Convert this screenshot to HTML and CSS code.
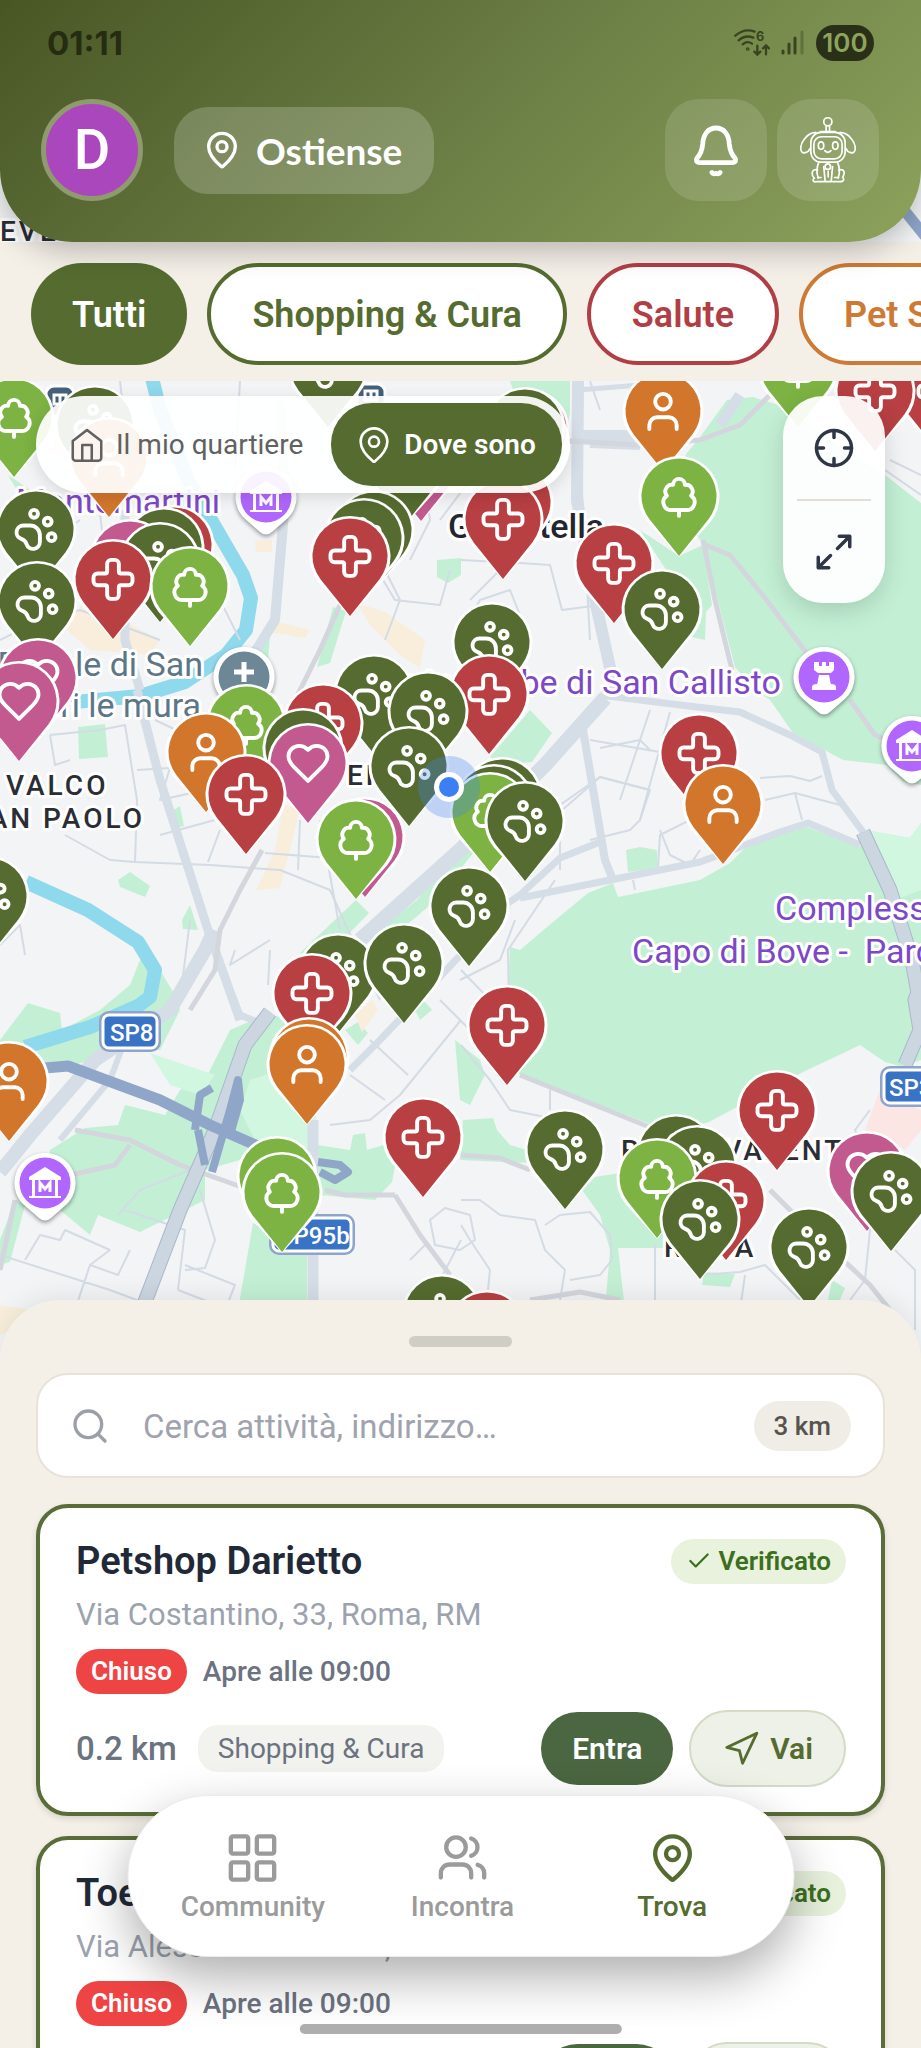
FILE: index.html
```html
<!DOCTYPE html>
<html lang="it">

<head>
    <meta charset="UTF-8">
    <meta name="viewport" content="width=device-width, initial-scale=1.0">
    <title>Trova</title>
    <link rel="stylesheet" href="styles.css">
</head>

<body>
    <!-- Shared icons -->
    <svg class="sprite" aria-hidden="true">
        <defs>
            <g id="i-pin">
                <path d="M20 10c0 4.993-5.539 10.193-7.399 11.799a1 1 0 0 1-1.202 0C9.539 20.193 4 14.993 4 10a8 8 0 0 1 16 0" />
                <circle cx="12" cy="10" r="3" />
            </g>
            <path id="i-cross" d="M4 9a2 2 0 0 0-2 2v2a2 2 0 0 0 2 2h4a1 1 0 0 1 1 1v4a2 2 0 0 0 2 2h2a2 2 0 0 0 2-2v-4a1 1 0 0 1 1-1h4a2 2 0 0 0 2-2v-2a2 2 0 0 0-2-2h-4a1 1 0 0 1-1-1V4a2 2 0 0 0-2-2h-2a2 2 0 0 0-2 2v4a1 1 0 0 1-1 1z" />
            <g id="i-paw">
                <circle cx="11" cy="4" r="2" />
                <circle cx="18" cy="8" r="2" />
                <circle cx="20" cy="16" r="2" />
                <path d="M9 10a5 5 0 0 1 5 5v3.5a3.5 3.5 0 0 1-6.84 1.045Q6.52 17.48 4.46 16.84A3.5 3.5 0 0 1 5.5 10Z" />
            </g>
            <g id="i-user">
                <circle cx="12" cy="7" r="4" />
                <path d="M19 21v-2a4 4 0 0 0-4-4H9a4 4 0 0 0-4 4v2" />
            </g>
            <path id="i-tree" d="M8 19a4 4 0 0 1-2.24-7.32A3.5 3.5 0 0 1 9 6.03V6a3 3 0 1 1 6 0v.04a3.5 3.5 0 0 1 3.24 5.65A4 4 0 0 1 16 19Zm4 0v3" />
            <path id="i-heart" d="M19 14c1.49-1.46 3-3.21 3-5.5A5.5 5.5 0 0 0 16.5 3c-1.76 0-3 .5-4.5 2-1.5-1.5-2.74-2-4.5-2A5.5 5.5 0 0 0 2 8.5c0 2.29 1.51 4.04 3 5.5l7 7Z" />
            <g id="i-send"><path d="M3 11 22 2l-9 19-2-8z" /></g>

            <path id="drop-edge" d="M0 1L-31-33.500A40.500 40.500 0 1 1 31-33.500Z" />
            <path id="drop" d="M0 0L-29.300-36.600A37.500 37.500 0 1 1 29.300-36.600Z" />
            <g id="m-shop">
                <use href="#drop-edge" class="edge" /><use href="#drop" class="shop" />
                <use href="#i-paw" class="glyph" transform="translate(-23.400 -83) scale(1.950)" />
            </g>
            <g id="m-health">
                <use href="#drop-edge" class="edge" /><use href="#drop" class="health" />
                <use href="#i-cross" class="glyph" transform="translate(-23.400 -83) scale(1.950)" />
            </g>
            <g id="m-sitter">
                <use href="#drop-edge" class="edge" /><use href="#drop" class="sitter" />
                <use href="#i-user" class="glyph" transform="translate(-23.400 -83) scale(1.950)" />
            </g>
            <g id="m-park">
                <use href="#drop-edge" class="edge" /><use href="#drop" class="park" />
                <use href="#i-tree" class="glyph" transform="translate(-23.400 -83) scale(1.950)" />
            </g>
            <g id="m-love">
                <use href="#drop-edge" class="edge" /><use href="#drop" class="love" />
                <use href="#i-heart" class="glyph" transform="translate(-23.400 -83) scale(1.950)" />
            </g>
            <path id="poi" d="M0-30A30 30 0 0 1 22 21L6 35Q0 40-6 35L-22 21A30 30 0 0 1 0-30Z" />
            <g id="museum">
                <use href="#poi" class="poi" />
                <circle r="25.500" fill="#b066ff" />
                <path d="M-16-6 0-16 16-6v3h-32zM-13-3h3v16h-3zM10-3h3v16h-3zM-16 13h32v2h-32z" fill="#fff" />
                <path d="M-5 9V0l5 6 5-6v9" fill="none" stroke="#fff" stroke-width="3" />
            </g>
        </defs>
    </svg>

    <div class="app">
        <!-- Map -->
        <svg class="map-canvas" viewBox="0 0 921 1400" preserveAspectRatio="xMidYMin slice" role="img" aria-label="Mappa di Ostiense">
            <rect width="921" height="1400" fill="#f3f4f5" />
            <g class="green">
                <path d="M665 480 700 437 727 400 753 397 785 407 830 440 885 475 921 503V785L903 782 887 765 843 760 793 733 770 700 755 690 735 667 715 590 703 545Z" />
                <path d="M640 530 679 556 703 545 712 605 706 612 705 640 692 637 676 585Z" />
                <path d="M510 947 520 950 547 927 588 893 613 883 618 897 700 880 730 863 743 850 780 833 807 827 860 847 865 830 910 838 921 823V1060L903 1067 885 1062 860 1045 833 1058 807 1070 737 1107 707 1123 653 1125 520 1075 505 1060Z" />
                <path d="M50 1150 85 1128 118 1125 125 1105 165 1115 180 1090 205 1080 230 1030 265 1015 308 1020 318 1150 240 1160 205 1170 205 1200 140 1232 98 1215 90 1235 60 1210 45 1180Z" />
                <path d="M0 1040 28 1003 60 1013 62 1030 100 1010 130 985 140 960 155 962 175 995 180 1010 160 1050 120 1050 60 1070 0 1070Z" />
                <path d="M0 1240 15 1200 25 1205 10 1262 0 1265Z" />
                <path d="M300 953 356 900 369 913 330 953Z" />
                <path d="M367 940 417 900 443 868 470 835 480 845 430 905 395 935Z" />
                <path d="M78 727 105 724 108 757 79 759Z" />
                <path d="M170 812 180 806 184 826 172 829Z" />
                <path d="M118 880 130 872 150 886 145 897 120 887Z" />
                <path d="M182 920 190 905 198 930 183 929Z" />
                <path d="M238 1310 253 1223 307 1250V1310Z" />
                <path d="M317 1145 350 1150 353 1135 365 1133 367 1150 400 1140 392 1182 375 1200 320 1195Z" />
                <path d="M345 1030 358 1022 368 1033 358 1045Z" />
                <path d="M410 1000 425 1002 432 1010 420 1020Z" />
                <path d="M455 1040 480 1060 485 1075 470 1105 460 1100Z" />
                <path d="M463 1120 493 1118 497 1130 510 1145 527 1150 530 1163 460 1160Z" />
                <path d="M575 1180 640 1170 668 1190 665 1248 618 1248 625 1310 605 1310 610 1250 600 1215Z" />
                <path d="M704 1272 735 1274 730 1287 702 1285Z" />
                <path d="M832 1280 845 1288 840 1300 828 1300Z" />
                <path d="M437 560 461 558V575L448 583 437 577Z" />
                <path d="M333 607 346 611 330 663 317 667Z" />
                <path d="M258 655 270 635 268 662Z" />
                <path d="M490 757 530 710 552 733 532 762 500 765Z" />
                <path d="M626 850 640 847 657 850 658 868 628 872Z" />
                <path d="M510 381H570V412L560 470 545 460 520 410Z" />
                <path d="M8 475 30 490 20 495Z" />
            </g>
            <path class="light-green" d="M250 1080 310 1060 318 1150 255 1140 240 1110ZM150 1053 215 1075 200 1095 170 1085ZM865 830 910 838 921 823V890L895 900Z" />
            <g class="sand">
                <path d="M65 628 85 600 160 640 150 655 90 650Z" />
                <path d="M270 620 310 630 305 638 268 632Z" />
                <path d="M357 603 385 612 425 640 420 668 400 655 370 625Z" />
                <path d="M283 804 300 810 280 888 256 890 275 850Z" />
                <path d="M60 430 75 440 70 460 50 450Z" />
                <path d="M255 540H272V552H256Z" />
                <path d="M355 1015 372 1000 378 1010 362 1032Z" />
                <path d="M0 1305 30 1310 10 1330 0 1335Z" />
            </g>
            <path d="M880 1090 921 1110V1130L905 1150 865 1130Z" fill="#fbe6e4" />

            <g class="river">
                <path d="M152 378 160 410 188 480 214 525 243 575 251 598 246 630 226 655 185 682 140 696 75 702" />
                <path d="M26 882 88 910 138 942 155 970 150 997 138 1006 90 1027 25 1047" />
            </g>

            <g class="street">
                <path d="M0 640 40 620 80 610 160 640M95 470 110 600M200 560 240 640M80 520 20 560" />
                <path d="M50 735 100 730 125 725 137 800 135 862 210 865 280 870 330 890 380 1000" />
                <path d="M50 735 55 765 70 760M65 835 110 860 135 862M155 720 240 760M137 770 170 768 160 800 205 790M160 835 215 820M220 830 208 862" />
                <path d="M265 853 330 858M300 820 298 870M320 820 340 930M180 1000 190 920M0 945 20 925 25 955M270 950 268 985M235 950 230 965 270 940" />
                <path d="M380 575 395 600 440 605 450 570M385 640 400 600 385 570 395 540M420 450 430 520 410 560M440 520 470 480" />
                <path d="M461 560 520 563 550 565 562 610 600 605M500 570 470 600M461 635 480 600 510 590 530 640M580 455 590 640" />
                <path d="M560 812 600 777 650 790M600 748 640 740 650 750M650 710 620 800M670 712 640 820M560 870 560 812M590 740 660 752M760 778 790 776 810 781 822 776M765 800 795 793 840 805M795 793 802 820" />
                <path d="M600 777 650 790 640 820 630 830 590 840M660 830 670 855 690 865 700 850M690 820 660 835 658 868M633 880 635 890M560 805 600 777" />
                <path d="M510 1080 508 950 555 880M460 980 500 960 515 920M461 970 490 1000" />
                <path d="M370 1040 408 1075M350 1075 385 1100M330 1125 370 1120 400 1095 461 1020M440 1000 480 1040M461 1045 490 1080 510 1110 550 1118M550 1090V1110" />
                <path d="M0 1255 110 1290 150 1305M25 1260 40 1235 60 1240 65 1230 110 1250M90 1265 75 1310M110 1250 90 1265 118 1275 130 1250M125 1210 185 1230 178 1290M185 1265 235 1285 225 1310M200 1190 215 1240 205 1268 185 1270M178 1290 230 1310M118 1215 140 1190 190 1170" />
                <path d="M430 1220 445 1208 470 1215 475 1240 460 1250 435 1245ZM461 1200 480 1200 500 1215 535 1220 545 1250 565 1270 560 1300M545 1225 560 1215 590 1212 610 1235 612 1260 600 1275 570 1280M461 1225 470 1240 490 1270 488 1290M410 1260 425 1245M461 1240 440 1280" />
                <path d="M655 1245 655 1310M700 1275 740 1272 765 1265 800 1300M745 1275 740 1310M840 1200 870 1230 865 1280 850 1300M895 1250 915 1270 915 1330M870 1110 855 1130 865 1150" />
                <path d="M590 381 600 410M885 470 921 495M890 460 921 475M240 381 235 470M120 381 130 470" />
            </g>

            <g class="road">
                <path d="M137 690 160 780 208 930 240 1020" />
                <path d="M125 510V640L140 690" />
                <path d="M0 1172 30 1135 95 1060 170 1010 205 950 214 930" stroke-width="14" />
                <path d="M60 1140 110 1080 125 1040" stroke-width="6" />
                <path d="M280 400 285 500 275 620 250 660" stroke-width="10" />
                <path d="M360 940 460 850 545 765 605 698" stroke-width="15" />
                <path d="M600 695 680 705 740 712 790 735 822 752 832 790 863 832" stroke-width="7" />
                <path d="M578 381 577 500 595 600 615 690" stroke-width="12" />
                <path d="M578 435H640M590 443 640 445" stroke-width="10" />
                <path d="M578 390 640 385" stroke-width="5" />
                <path d="M583 730 605 860 613 880" stroke-width="8" />
                <path d="M505 905 520 895 560 858 600 842M520 898 610 880 700 862 780 832 808 823 860 845" stroke-width="7" />
                <path d="M508 905 470 945 380 1040 350 1070" stroke-width="7" />
                <path d="M230 990 240 1015 265 1025" stroke-width="7" />
                <path d="M313 1320V1120" stroke-width="11" />
                <path d="M720 425 740 395" stroke-width="11" />
            </g>
            <g class="rail">
                <path d="M262 850 240 890 220 930 215 970 190 1010" />
                <path d="M360 560 320 650 295 700" />
                <path d="M461 435 640 445 700 440 740 425 775 390" />
                <path d="M703 540 715 600 732 670M705 545 730 555 765 598 808 655 825 690M850 700 875 735 900 745" />
                <path d="M75 1130 130 1140 180 1165 250 1190M130 1145 115 1165 70 1175M15 1200 0 1270" />
                <path d="M325 1190 345 1195 395 1195M395 1195 420 1235 450 1275M770 1190 800 1220 870 1285 890 1310" />
                <path d="M530 1300 580 1292 620 1300M461 1155 500 1158 530 1170" />
                <path d="M520 1075 652 1128" />
            </g>
            <path id="motorway" class="motorway-edge" d="M270 1012 245 1045 215 1130 180 1210 140 1315M863 832 890 890 912 960 921 1010M921 985 915 1000 920 1030 905 1065" />
            <path class="motorway" d="M270 1012 245 1045 215 1130 180 1210 140 1315M863 832 890 890 912 960 921 1010M921 985 915 1000 920 1030 905 1065" />
            <g class="highway">
                <path d="M45 1068 68 1066 160 1100 210 1125 260 1147" />
                <path d="M195 1130 200 1095 212 1088M198 1130 205 1165M212 1172 230 1110 238 1080 240 1100 230 1135M318 1162 340 1165 348 1172 335 1180 320 1172" stroke-width="8" />
                <path d="M900 205 925 236" stroke-width="11" />
            </g>

            <g class="label">
                <text x="0" y="241" class="area">EVERE</text>
                <text x="220" y="513" class="place" text-anchor="end">Montemartini</text>
                <text x="448" y="538" class="town">Garbatella</text>
                <text x="203" y="676" class="health-place" text-anchor="end">Papale di San</text>
                <text x="201" y="717" class="health-place" text-anchor="end">fuori le mura</text>
                <text x="6" y="795" class="area">VALCO</text>
                <text x="145" y="828" class="area" text-anchor="end">SAN PAOLO</text>
                <text x="347" y="785" class="area">EN</text>
                <text x="781" y="694" class="place" text-anchor="end">Catacombe di San Callisto</text>
                <text x="775" y="920" class="place">Complesso</text>
                <text x="632" y="963" class="place">Capo di Bove -&#160; Parco</text>
                <text x="621" y="1160" class="area">ROMA VALENT</text>
                <text x="664" y="1257" class="area">ROMA</text>
            </g>

            <g class="shield">
                <rect x="103" y="1015" width="54" height="33" rx="6" class="shield-ring" />
                <rect x="103" y="1015" width="54" height="33" rx="6" />
                <text x="110" y="1041">SP8</text>
                <rect x="273" y="1218" width="78" height="33" rx="6" class="shield-ring" />
                <rect x="273" y="1218" width="78" height="33" rx="6" />
                <text x="279" y="1244">SP95b</text>
                <rect x="884" y="1070" width="60" height="33" rx="6" class="shield-ring" />
                <rect x="884" y="1070" width="60" height="33" rx="6" />
                <text x="889" y="1096">SP3</text>
            </g>

            <!-- Points of interest -->
            <use href="#museum" x="266" y="497" />
            <use href="#museum" x="45" y="1183" />
            <use href="#museum" x="912" y="746" />
            <g transform="translate(824 677)">
                <use href="#poi" class="poi" />
                <circle r="25.500" fill="#b066ff" />
                <path d="M-10-15h5v4h3v-4h4v4h3v-4h5v8l-3 3H-6l-4-3zM-5-2H5l2 10H-7zM-12 10q0-3 5-3H7q5 0 5 3v3h-24z" fill="#fff" />
            </g>
            <g transform="translate(244 677)">
                <use href="#poi" class="poi" />
                <circle r="25.500" fill="#6d8797" />
                <path d="M-10-5H10M0-15V5" stroke="#fff" stroke-width="5" />
            </g>
            <g class="metro">
                <g transform="translate(60 396)"><rect x="-14" y="-10" width="28" height="30" rx="8" /><path d="M-6-1H6V8H-6ZM0-1V8" /></g>
                <g transform="translate(371 396)"><rect x="-14" y="-12" width="28" height="30" rx="8" /><path d="M-6-5H6V4H-6ZM0-5V4" /></g>
            </g>

            <!-- Markers, back to front -->
            <use href="#m-park" x="14" y="477" />
            <use href="#m-shop" x="95" y="485" />
            <use href="#m-sitter" x="109" y="517" />
            <use href="#m-shop" x="328" y="427" />
            <use href="#m-love" x="529" y="489" />
            <use href="#m-shop" x="525" y="487" />
            <use href="#m-sitter" x="663" y="471" />
            <use href="#m-park" x="798" y="427" />
            <use href="#m-health" x="938" y="451" />
            <use href="#m-health" x="875" y="451" />
            <use href="#m-love" x="421" y="521" />
            <use href="#m-shop" x="406" y="523" />
            <use href="#m-health" x="513" y="562" />
            <use href="#m-health" x="503" y="579" />
            <use href="#m-park" x="679" y="556" />
            <use href="#m-shop" x="36" y="589" />
            <use href="#m-shop" x="37" y="661" />
            <use href="#m-health" x="174" y="605" />
            <use href="#m-shop" x="164" y="607" />
            <use href="#m-love" x="130" y="619" />
            <use href="#m-shop" x="160" y="622" />
            <use href="#m-health" x="113" y="639" />
            <use href="#m-park" x="190" y="646" />
            <use href="#m-shop" x="374" y="590" />
            <use href="#m-shop" x="364" y="598" />
            <use href="#m-health" x="350" y="616" />
            <use href="#m-health" x="614" y="623" />
            <use href="#m-shop" x="662" y="669" />
            <use href="#m-love" x="38" y="738" />
            <use href="#m-love" x="19" y="761" />
            <use href="#m-shop" x="492" y="702" />
            <use href="#m-health" x="489" y="754" />
            <use href="#m-shop" x="374" y="754" />
            <use href="#m-shop" x="428" y="771" />
            <use href="#m-park" x="246" y="784" />
            <use href="#m-health" x="323" y="783" />
            <use href="#m-shop" x="303" y="808" />
            <use href="#m-love" x="308" y="823" />
            <use href="#m-sitter" x="206" y="812" />
            <use href="#m-health" x="246" y="854" />
            <use href="#m-health" x="699" y="813" />
            <use href="#m-sitter" x="723" y="864" />
            <use href="#m-shop" x="409" y="826" />
            <use href="#m-shop" x="502" y="857" />
            <use href="#m-shop" x="494" y="864" />
            <use href="#m-park" x="490" y="872" />
            <circle cx="449" cy="787" r="31" fill="#4285f4" opacity=".3" />
            <circle cx="449" cy="787" r="15" fill="#fff" />
            <circle cx="449" cy="787" r="10" fill="#3c7ff5" />
            <use href="#m-shop" x="525" y="881" />
            <use href="#m-love" x="365" y="897" />
            <use href="#m-park" x="356" y="899" />
            <use href="#m-shop" x="-11" y="956" />
            <use href="#m-shop" x="469" y="966" />
            <use href="#m-shop" x="338" y="1033" />
            <use href="#m-shop" x="404" y="1023" />
            <use href="#m-health" x="312" y="1053" />
            <use href="#m-health" x="507" y="1085" />
            <use href="#m-sitter" x="309" y="1117" />
            <use href="#m-sitter" x="307" y="1124" />
            <use href="#m-sitter" x="9" y="1141" />
            <use href="#m-health" x="777" y="1170" />
            <use href="#m-health" x="423" y="1197" />
            <use href="#m-shop" x="565" y="1209" />
            <use href="#m-shop" x="676" y="1214" />
            <use href="#m-shop" x="697" y="1225" />
            <use href="#m-love" x="867" y="1231" />
            <use href="#m-park" x="277" y="1236" />
            <use href="#m-park" x="657" y="1238" />
            <use href="#m-park" x="282" y="1252" />
            <use href="#m-shop" x="891" y="1251" />
            <use href="#m-health" x="726" y="1260" />
            <use href="#m-shop" x="700" y="1279" />
            <use href="#m-shop" x="809" y="1307" />
            <use href="#m-shop" x="442" y="1374" />
            <use href="#m-health" x="487" y="1390" />
        </svg>

        <header class="header">
            <div class="status">
                <span class="clock">01:11</span>
                <div class="status-icons">
                    <svg width="36" height="28" viewBox="0 0 108 84" class="wifi" aria-hidden="true">
                        <path d="M4 20Q32-4 62 8M14 34Q34 16 58 26M26 46Q40 34 54 44" />
                        <circle cx="41" cy="60" r="2" />
                        <path d="M70 50V76M61 68l9 9 9-9M96 76V50M87 58l9-9 9 9" />
                        <text x="66" y="35">6</text>
                    </svg>
                    <svg width="24" height="26" viewBox="0 0 24 26" class="bars" aria-hidden="true">
                        <path d="M3 21v2M9 14v9M15 8v15" />
                        <path d="M22 2v21" opacity=".4" />
                    </svg>
                    <span class="battery">100</span>
                </div>
            </div>
            <div class="header-row">
                <button class="avatar" aria-label="Profilo">D</button>
                <button class="location">
                    <svg class="icon" width="40" height="40" viewBox="0 0 24 24"><use href="#i-pin" /></svg>
                    Ostiense
                </button>
                <div class="header-actions">
                    <button class="square-btn" aria-label="Notifiche">
                        <svg class="icon" width="58" height="58" viewBox="0 0 24 24">
                            <path d="M10.300 21.300q.7.900 1.700.4 1 .5 1.700-.4M5 17.200h14c1 0 1.500-1 .9-1.800C18.500 14 17.800 12.500 17.500 9.500 17.300 5.800 15.400 2.900 12 2.900S6.700 5.800 6.500 9.500C6.200 12.500 5.500 14 4.100 15.400 3.500 16.200 4 17.200 5 17.200Z" />
                        </svg>
                    </button>
                    <button class="square-btn" aria-label="Assistente">
                        <svg class="robot" width="56" height="66" viewBox="0 0 165 194">
                            <circle cx="82" cy="14" r="12" />
                            <path d="M77 27v16M87 27v16M60 43h44" />
                            <rect x="32" y="45" width="101" height="88" rx="30" />
                            <rect x="41" y="58" width="83" height="65" rx="22" />
                            <ellipse cx="62" cy="84" rx="8" ry="11" />
                            <ellipse cx="104" cy="84" rx="8" ry="11" />
                            <path d="M73 99q9 10 18 0" />
                            <path d="M47 46C22 44-2 78 3 98c3 12 22 8 27-6M118 46c25-2 49 32 44 52-3 12-22 8-27-6" />
                            <path d="M56 132c-8 18-8 34-2 48M110 132c8 18 8 34 2 48M70 146l4 42M96 146l-4 42M83 160v16" />
                            <circle cx="82" cy="146" r="8" />
                            <path d="M52 156c-18-6-20 14-10 24-8 8 0 12 6 10h70c8 2 14-6 8-12 8-16 4-26-12-22M62 178h-10M102 178h12" />
                        </svg>
                    </button>
                </div>
            </div>
        </header>

        <nav class="filters" aria-label="Categorie">
            <button class="chip chip-active">Tutti</button>
            <button class="chip chip-shop">Shopping &amp; Cura</button>
            <button class="chip chip-health">Salute</button>
            <button class="chip chip-sitter">Pet Sitter</button>
        </nav>

        <section class="map-area">
            <div class="switch">
                <button class="switch-btn">
                    <svg class="icon thin" width="38" height="38" viewBox="0 0 24 24">
                        <path d="M3 9.500 12 2.500l9 7V20a2 2 0 0 1-2 2H5a2 2 0 0 1-2-2zM9 22V12h6v10" />
                    </svg>
                    Il mio quartiere
                </button>
                <button class="switch-btn switch-on">
                    <svg class="icon thin" width="40" height="40" viewBox="0 0 24 24"><use href="#i-pin" /></svg>
                    Dove sono
                </button>
            </div>
            <div class="map-tools">
                <button aria-label="Centra la mappa">
                    <svg class="icon" width="42" height="42" viewBox="0 0 24 24">
                        <circle cx="12" cy="12" r="10" />
                        <path d="M22 12h-4M6 12H2M12 6V2M12 22v-4" />
                    </svg>
                </button>
                <button aria-label="Schermo intero">
                    <svg class="icon" width="42" height="42" viewBox="0 0 24 24">
                        <path d="M15 3h6v6M21 3l-7 7M9 21H3v-6M3 21l7-7" />
                    </svg>
                </button>
            </div>
        </section>

        <main class="sheet">
            <div class="handle"></div>
            <div class="search">
                <label for="q" aria-label="Cerca">
                    <svg class="icon" width="40" height="40" viewBox="0 0 24 24">
                        <circle cx="11" cy="11" r="8" />
                        <path d="m21 21-4.300-4.300" />
                    </svg>
                </label>
                <input id="q" type="text" placeholder="Cerca attività, indirizzo…">
                <button class="radius">3 km</button>
            </div>

            <article class="card">
                <div class="card-head">
                    <h2>Petshop Darietto</h2>
                    <span class="verified">
                        <svg class="icon" width="26" height="26" viewBox="0 0 24 24"><path d="M20 6 9 17l-5-5" /></svg>
                        Verificato
                    </span>
                </div>
                <p class="address">Via Costantino, 33, Roma, RM</p>
                <p class="hours"><span class="closed">Chiuso</span>Apre alle 09:00</p>
                <div class="card-foot">
                    <span class="distance">0.2 km</span>
                    <span class="tag">Shopping &amp; Cura</span>
                    <button class="enter">Entra</button>
                    <button class="go">
                        <svg class="icon" width="38" height="38" viewBox="0 0 24 24"><use href="#i-send" /></svg>
                        Vai
                    </button>
                </div>
            </article>

            <article class="card">
                <div class="card-head">
                    <h2>Toelettatura</h2>
                    <span class="verified">
                        <svg class="icon" width="26" height="26" viewBox="0 0 24 24"><path d="M20 6 9 17l-5-5" /></svg>
                        Verificato
                    </span>
                </div>
                <p class="address">Via Alessandro Severo, 73</p>
                <p class="hours"><span class="closed">Chiuso</span>Apre alle 09:00</p>
                <div class="card-foot">
                    <span class="distance">0.3 km</span>
                    <span class="tag">Shopping &amp; Cura</span>
                    <button class="enter">Entra</button>
                    <button class="go">
                        <svg class="icon" width="38" height="38" viewBox="0 0 24 24"><use href="#i-send" /></svg>
                        Vai
                    </button>
                </div>
            </article>
        </main>

        <nav class="tabs" aria-label="Principale">
            <a href="#community">
                <svg class="icon" width="52" height="52" viewBox="0 0 24 24">
                    <rect x="2" y="2" width="8" height="8" rx="1" />
                    <rect x="14" y="2" width="8" height="8" rx="1" />
                    <rect x="14" y="14" width="8" height="8" rx="1" />
                    <rect x="2" y="14" width="8" height="8" rx="1" />
                </svg>
                Community
            </a>
            <a href="#incontra">
                <svg class="icon" width="52" height="52" viewBox="0 0 24 24">
                    <circle cx="9" cy="7" r="4.500" />
                    <path d="M16 21v-2a4 4 0 0 0-4-4H6a4 4 0 0 0-4 4v2M22 21v-2a4 4 0 0 0-3-3.870M16 3a4.200 4.200 0 0 1 0 8" />
                </svg>
                Incontra
            </a>
            <a href="#trova" class="current">
                <svg class="icon" width="52" height="52" viewBox="0 0 24 24"><use href="#i-pin" /></svg>
                Trova
            </a>
        </nav>
        <div class="home-bar"></div>
    </div>
</body>

</html>
```
FILE: styles.css
```css
* {
    box-sizing: border-box;
}

body {
    margin: 0;
    font-family: Roboto, "Liberation Sans", sans-serif;
    background: #f4f0e8;
}

button,
input {
    font: inherit;
    color: inherit;
    border: none;
    background: none;
    padding: 0;
    margin: 0;
}

button {
    cursor: pointer;
}

h2,
p {
    margin: 0;
}

.sprite {
    position: absolute;
    width: 0;
    height: 0;
}

.icon {
    flex: none;
    fill: none;
    stroke: currentColor;
    stroke-width: 2;
    stroke-linecap: round;
    stroke-linejoin: round;
}

.thin {
    stroke-width: 1.6;
}

.app {
    position: relative;
    display: flex;
    flex-direction: column;
    height: 100vh;
    overflow: hidden;
}

/* Map */
.map-canvas {
    position: absolute;
    top: 0;
    left: 0;
    width: 100%;
    height: 1400px;
}

.green { fill: #c3f0d5; }
.light-green { fill: #d1f7e1; }
.sand { fill: #f8eedb; }

.river,
.street,
.road,
.rail,
.motorway,
.motorway-edge,
.highway {
    fill: none;
    stroke-linejoin: round;
}

.river { stroke: #8fd9ec; stroke-width: 14; }
.street { stroke: #d3dbe5; stroke-width: 2; }
.road { stroke: #d5dde6; stroke-width: 9; }
.rail { stroke: #d3d6dc; stroke-width: 5; }
.motorway-edge { stroke: #a9b8c9; stroke-width: 15; }
.motorway { stroke: #cbd6e1; stroke-width: 13; }
.highway { stroke: #8fa6c9; stroke-width: 11; }

.edge { fill: #fff; }
.shop { fill: #556b2f; }
.health { fill: #b83f42; }
.sitter { fill: #d2762c; }
.park { fill: #7cb342; }
.love { fill: #c2598f; }

.glyph {
    fill: none;
    stroke: #fff;
    stroke-width: 2;
    stroke-linecap: round;
    stroke-linejoin: round;
}

.poi {
    fill: #fff;
    filter: drop-shadow(0 2px 2px rgba(0, 0, 0, 0.4));
}

.metro rect {
    fill: #44607a;
    stroke: #fff;
    stroke-width: 3;
}

.metro path {
    fill: none;
    stroke: #fff;
    stroke-width: 3;
}

.label text {
    stroke: #fff;
    stroke-width: 6;
    stroke-linejoin: round;
    paint-order: stroke;
}

.area {
    font-size: 28px;
    font-weight: 500;
    letter-spacing: 3px;
    fill: #2b2d35;
}

.town {
    font-size: 34px;
    font-weight: 500;
    fill: #23262e;
}

.place {
    font-size: 34px;
    fill: #7d48c8;
}

.health-place {
    font-size: 34px;
    fill: #5b7688;
}

.shield rect {
    fill: #3973c6;
    stroke: #fff;
    stroke-width: 3;
}

.shield .shield-ring {
    stroke: #8fa3cc;
    stroke-width: 8;
}

.shield text {
    font-size: 24px;
    font-weight: 500;
    fill: #fff;
}

/* Header */
.header {
    position: relative;
    z-index: 2;
    padding: 0 42px 41px 41px;
    border-radius: 0 0 72px 72px;
    background: linear-gradient(135deg, #485624, #6a7d44 50%, #8ca25c);
    box-shadow: 0 8px 30px rgba(0, 0, 0, 0.25);
}

.status {
    display: flex;
    justify-content: space-between;
    align-items: center;
    height: 99px;
    padding: 0 5px 13px 6px;
    color: #252c12;
    font-family: Inter, Roboto, sans-serif;
}

.clock {
    font-size: 33px;
    font-weight: 700;
}

.status-icons {
    display: flex;
    align-items: center;
    gap: 10px;
}

.wifi,
.bars {
    fill: none;
    stroke: #3a4520;
    stroke-width: 7;
    stroke-linecap: round;
}

.bars {
    stroke-width: 3;
    margin-right: 2px;
}

.wifi text {
    font-size: 38px;
    font-weight: 700;
    fill: #3a4520;
    stroke: none;
}

.battery {
    width: 58px;
    height: 36px;
    border-radius: 18px;
    background: #2a3018;
    color: #8ea45e;
    font-size: 26px;
    font-weight: 600;
    line-height: 36px;
    text-align: center;
}

.header-row {
    display: flex;
    align-items: center;
}

.avatar {
    width: 102px;
    height: 102px;
    border: 5px solid #8f9a6d;
    border-radius: 50%;
    background: #ab47bc;
    color: #fff;
    font-size: 56px;
    font-weight: 500;
    line-height: 92px;
}

.location {
    display: flex;
    align-items: center;
    gap: 14px;
    height: 87px;
    margin-left: 31px;
    padding: 0 32px 0 28px;
    border-radius: 34px;
    background: rgba(255, 255, 255, 0.2);
    color: #fff;
    font-family: Lato, Roboto, sans-serif;
    font-size: 37px;
    font-weight: 700;
}

.header-actions {
    display: flex;
    gap: 10px;
    margin-left: auto;
}

.square-btn {
    display: grid;
    place-items: center;
    width: 102px;
    height: 102px;
    border-radius: 34px;
    background: rgba(255, 255, 255, 0.13);
    color: #fff;
}

.robot {
    fill: none;
    stroke: #fff;
    stroke-width: 5;
    stroke-linecap: round;
}

/* Category filters */
.filters {
    position: relative;
    z-index: 1;
    display: flex;
    gap: 20px;
    padding: 21px 31px 16px;
    background: #f4efe7;
    overflow: hidden;
}

.chip {
    flex: none;
    height: 102px;
    padding: 2px 41px 0;
    border: 4px solid currentColor;
    border-radius: 51px;
    background: #fff;
    font-size: 36px;
    font-weight: 600;
}

.chip-active {
    border: none;
    background: #556b2f;
    color: #fff;
}

.chip-shop { color: #556b2f; }
.chip-health { color: #b03f45; }
.chip-sitter { color: #cc7a35; }

/* Controls over the map */
.map-area {
    position: relative;
    flex: 1;
    display: flex;
    justify-content: space-between;
    align-items: flex-start;
    padding: 15px 36px;
}

.switch {
    display: flex;
    padding: 7px 8px;
    border-radius: 48px;
    background: rgba(255, 255, 255, 0.92);
    box-shadow: 0 4px 16px rgba(0, 0, 0, 0.12);
}

.switch-btn {
    display: flex;
    align-items: center;
    gap: 10px;
    height: 83px;
    padding: 0 28px 0 24px;
    border-radius: 41px;
    color: #616161;
    font-size: 28px;
}

.switch-on {
    padding: 0 26px 0 23px;
    background: #556b2f;
    color: #fff;
    font-weight: 600;
}

.map-tools {
    display: flex;
    flex-direction: column;
    width: 102px;
    padding: 0 14px;
    border-radius: 40px;
    background: rgba(255, 255, 255, 0.93);
    box-shadow: 0 8px 24px rgba(0, 0, 0, 0.15);
    color: #2f3747;
}

.map-tools button {
    display: grid;
    place-items: center;
    height: 103px;
}

.map-tools button + button {
    height: 104px;
    border-top: 2px solid #e3ddd6;
}

/* Bottom sheet */
.sheet {
    position: relative;
    flex: 0 0 748px;
    padding: 36px 36px 0;
    border-radius: 60px 60px 0 0;
    background: #f4f0e8;
    box-shadow: 0 -4px 24px rgba(0, 0, 0, 0.08);
    overflow: hidden;
}

.handle {
    width: 103px;
    height: 11px;
    margin: 0 auto 26px;
    border-radius: 6px;
    background: #d0cdc4;
}

.search {
    display: flex;
    align-items: center;
    height: 105px;
    margin-bottom: 26px;
    padding: 0 32px;
    border: 2px solid #e7e3d9;
    border-radius: 32px;
    background: #fff;
    color: #9c9fa9;
}

.search label {
    display: flex;
}

.search input {
    flex: 1;
    min-width: 0;
    margin-left: 33px;
    padding-top: 2px;
    font-size: 33px;
    outline: none;
}

.search input::placeholder {
    color: #9fa3af;
    opacity: 1;
}

.radius {
    height: 50px;
    padding: 0 20px;
    border-radius: 25px;
    background: #f0ede7;
    color: #57534e;
    font-size: 26px;
    font-weight: 500;
}

.card {
    height: 312px;
    margin-bottom: 20px;
    padding: 30px 35px 0 36px;
    border: 4px solid #5a6d38;
    border-radius: 32px;
    background: #fff;
    box-shadow: 0 3px 6px rgba(0, 0, 0, 0.12);
}

.card-head {
    display: flex;
    justify-content: space-between;
    align-items: center;
    height: 46px;
}

.card h2 {
    color: #1f2937;
    font-size: 38px;
    font-weight: 600;
}

.verified {
    display: flex;
    align-items: center;
    gap: 6px;
    height: 45px;
    padding: 0 15px;
    border-radius: 23px;
    background: #e8f2dd;
    color: #3b6f1e;
    font-size: 26px;
    font-weight: 600;
}

.address {
    margin-top: 10px;
    color: #9ca3af;
    font-size: 31px;
    line-height: 42px;
}

.hours {
    display: flex;
    align-items: center;
    gap: 16px;
    margin-top: 13px;
    color: #6b7280;
    font-size: 28px;
    font-weight: 500;
}

.closed {
    padding: 0 15px;
    border-radius: 23px;
    background: #ef4444;
    color: #fff;
    font-size: 26px;
    font-weight: 600;
    line-height: 45px;
}

.card-foot {
    display: flex;
    align-items: center;
    margin-top: 16px;
    color: #6b7280;
}

.distance {
    margin-right: 21px;
    font-size: 33px;
    font-weight: 500;
}

.tag {
    margin-right: auto;
    padding: 0 20px;
    border-radius: 20px;
    background: #f2f3ef;
    font-size: 28px;
    line-height: 47px;
}

.enter {
    height: 73px;
    margin-right: 16px;
    padding: 0 31px;
    border-radius: 37px;
    background: #4a6741;
    color: #fff;
    font-size: 30px;
    font-weight: 600;
}

.go {
    display: flex;
    align-items: center;
    gap: 10px;
    height: 77px;
    padding: 0 31px;
    border: 2px solid #d3dac5;
    border-radius: 39px;
    background: #eef1e7;
    color: #556b2f;
    font-size: 30px;
    font-weight: 600;
}

.go .icon {
    stroke-width: 1.8;
}

/* Floating tab bar */
.tabs {
    position: absolute;
    left: 50%;
    bottom: 91px;
    display: flex;
    width: 667px;
    max-width: 90%;
    height: 162px;
    padding: 0 16px 0 20px;
    border: 1px solid #ececec;
    border-radius: 81px;
    background: #fff;
    box-shadow: 0 20px 50px rgba(0, 0, 0, 0.32);
    transform: translateX(-50%);
}

.tabs a {
    flex: 1;
    display: flex;
    flex-direction: column;
    align-items: center;
    gap: 6px;
    padding-top: 36px;
    color: #9b9b9b;
    font-size: 28px;
    font-weight: 500;
    text-decoration: none;
}

.tabs .current {
    color: #556b2f;
}

.home-bar {
    position: absolute;
    left: 50%;
    bottom: 14px;
    width: 35%;
    height: 10px;
    border-radius: 5px;
    background: #aeaeae;
    transform: translateX(-50%);
}
```
